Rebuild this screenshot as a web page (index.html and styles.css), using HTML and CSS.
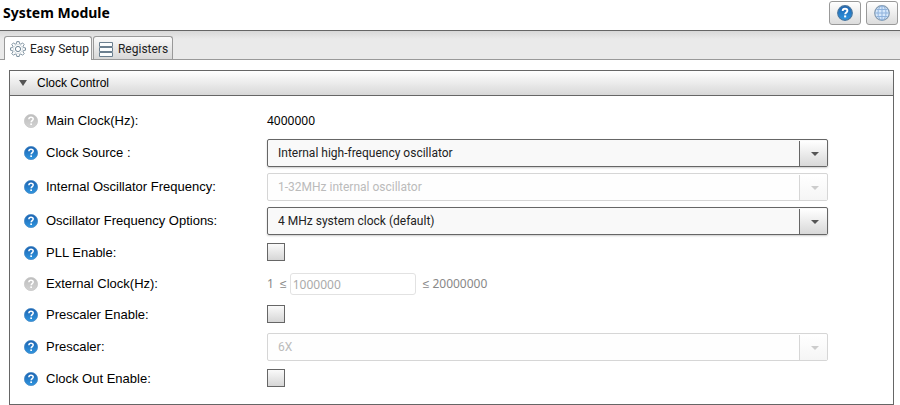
FILE: index.html
```html
<!DOCTYPE html>
<html lang="en">
<head>
<meta charset="utf-8">
<title>System Module</title>
<link rel="stylesheet" href="styles.css">
</head>
<body>
<svg class="sprites" aria-hidden="true">
  <defs>
    <linearGradient id="blue" x1="0" y1="0" x2="0" y2="1">
      <stop offset="0" stop-color="#1c62b0"/><stop offset="1" stop-color="#2f96e0"/>
    </linearGradient>
    <linearGradient id="gray" x1="0" y1="0" x2="0" y2="1">
      <stop offset="0" stop-color="#bdbdbd"/><stop offset="1" stop-color="#d2d2d2"/>
    </linearGradient>
    <symbol id="mark" viewBox="0 0 14 14">
      <path d="M4.9 5.3C4.9 3.9 5.7 3.2 7 3.2s2.2.8 2.2 1.9c0 1.5-2 1.6-2 3.2" fill="none" stroke="#fff" stroke-width="1.5"/>
      <rect x="6.3" y="9.4" width="1.7" height="1.6" fill="#fff"/>
    </symbol>
    <symbol id="help" viewBox="0 0 14 14">
      <circle cx="7" cy="7" r="6.6" fill="url(#blue)" stroke="#4a8cc6" stroke-width=".8"/>
      <use href="#mark"/>
    </symbol>
    <symbol id="help-off" viewBox="0 0 14 14">
      <circle cx="7" cy="7" r="6.6" fill="url(#gray)" stroke="#c8c8c8" stroke-width=".8"/>
      <use href="#mark"/>
    </symbol>
  </defs>
</svg>

<header class="titlebar">
  <h1>System Module</h1>
  <div class="actions">
    <button type="button" class="action" aria-label="Help">
      <svg width="16" height="16" viewBox="0 0 16 16">
        <circle cx="8" cy="8" r="7.3" fill="url(#blue)" stroke="#47759f" stroke-width="1.2"/>
        <path d="M5.7 5.9C5.7 4.3 6.6 3.7 8 3.7s2.4.8 2.4 2c0 1.7-2.2 1.8-2.2 3.5" fill="none" stroke="#fff" stroke-width="1.9"/>
        <rect x="7.1" y="10.4" width="2.1" height="2" fill="#fff"/>
      </svg>
    </button>
    <button type="button" class="action" aria-label="Web">
      <svg width="16" height="16" viewBox="0 0 16 16" fill="none">
        <circle cx="8" cy="8" r="7.3" fill="#d6e8fb" stroke="#8299b0" stroke-width="1.2"/>
        <path d="M8 1v14M1 8h14M2.4 4.5h11.2M2.4 11.5h11.2" stroke="#8fb2dc"/>
        <ellipse cx="8" cy="8" rx="4" ry="7" stroke="#8fb2dc"/>
      </svg>
    </button>
  </div>
</header>

<nav class="tabs" role="tablist">
  <button type="button" class="tab active" role="tab" aria-selected="true">
    <svg width="16" height="16" viewBox="0 0 16 16" fill="#fff" stroke="#728796">
      <path d="M6.8.6h2.4l.3 2 1.4.6 1.7-1.3 1.6 1.7-1.2 1.6.6 1.4 1.9.3v2.3l-2 .3-.5 1.4 1.2 1.7-1.6 1.6-1.7-1.2-1.4.6-.3 1.9H6.8l-.3-1.9-1.4-.6-1.7 1.2-1.6-1.6L3 10.9l-.6-1.4-1.9-.3V6.9l1.9-.3L3 5.2 1.8 3.6l1.6-1.7 1.7 1.3 1.4-.6z" stroke-width=".9"/>
      <circle cx="8" cy="8" r="4.5" stroke="#c3ced6" stroke-width=".7"/>
      <circle cx="8" cy="8" r="2.6"/>
    </svg>
    Easy Setup
  </button>
  <button type="button" class="tab" role="tab" aria-selected="false">
    <svg width="14" height="15" viewBox="0 0 14 15" fill="#fbfdfe" stroke="#6b7f8f">
      <path d="M.5.5h13v4H.5zM.5 5.5h13v4H.5zM.5 10.5h13v4H.5z"/>
    </svg>
    Registers
  </button>
</nav>

<main>
  <details class="panel" open>
    <summary><svg width="8" height="6" viewBox="0 0 8 6"><path d="M0 0h8L4 6z" fill="#555"/></svg>Clock Control</summary>
    <form class="fields">
      <div class="row">
        <svg class="help"><use href="#help-off"/></svg>
        <span class="name">Main Clock(Hz):</span>
        <output class="value">4000000</output>
      </div>
      <div class="row tall">
        <svg class="help"><use href="#help"/></svg>
        <label class="name" for="source">Clock Source :</label>
        <span class="combo"><select id="source"><option>Internal high-frequency oscillator</option></select></span>
      </div>
      <div class="row tall">
        <svg class="help"><use href="#help"/></svg>
        <label class="name" for="internal">Internal Oscillator Frequency:</label>
        <span class="combo off"><select id="internal" disabled><option>1-32MHz internal oscillator</option></select></span>
      </div>
      <div class="row tall">
        <svg class="help"><use href="#help"/></svg>
        <label class="name" for="options">Oscillator Frequency Options:</label>
        <span class="combo"><select id="options"><option>4 MHz system clock (default)</option></select></span>
      </div>
      <div class="row">
        <svg class="help"><use href="#help"/></svg>
        <label class="name" for="pll">PLL Enable:</label>
        <input type="checkbox" id="pll">
      </div>
      <div class="row medium">
        <svg class="help"><use href="#help-off"/></svg>
        <label class="name" for="external">External Clock(Hz):</label>
        <span class="range"><span>1&nbsp; ≤</span><input type="text" id="external" value="1000000" disabled><span class="upper">≤ 20000000</span></span>
      </div>
      <div class="row">
        <svg class="help"><use href="#help"/></svg>
        <label class="name" for="prescale">Prescaler Enable:</label>
        <input type="checkbox" id="prescale">
      </div>
      <div class="row tall">
        <svg class="help"><use href="#help"/></svg>
        <label class="name" for="prescaler">Prescaler:</label>
        <span class="combo off"><select id="prescaler" disabled><option>6X</option></select></span>
      </div>
      <div class="row">
        <svg class="help"><use href="#help"/></svg>
        <label class="name" for="clockout">Clock Out Enable:</label>
        <input type="checkbox" id="clockout">
      </div>
    </form>
  </details>
</main>
</body>
</html>
```

FILE: styles.css
```css
* { box-sizing: border-box; }

body {
  margin: 0;
  background: #fff;
  color: #000;
  font: 12px/16px "Noto Sans", sans-serif;
}

svg { display: block; flex: none; }
.sprites { position: absolute; width: 0; height: 0; }

.titlebar {
  display: flex;
  justify-content: space-between;
  align-items: center;
  height: 30px;
  padding: 0 2px 4px 3px;
}

h1 {
  margin: 0;
  font: bold 14px/22px "Noto Sans", sans-serif;
}

.actions { display: flex; gap: 5px; }

.action {
  display: flex;
  align-items: center;
  justify-content: center;
  width: 32px;
  height: 24px;
  padding: 0;
  border: 1px solid #999;
  border-radius: 3px;
  background: linear-gradient(#fff, #dcdcdc);
}

.tabs {
  display: flex;
  gap: 1px;
  height: 30px;
  padding: 5px 4px 0;
  border-top: 1px solid #666;
  border-bottom: 1px solid #999;
  background: linear-gradient(#d8d8d8, #eaeaea 8px);
}

.tab {
  display: flex;
  align-items: center;
  gap: 5px;
  height: 23px;
  padding: 2px 4px 0 5px;
  border: 1px solid #999;
  border-bottom: 0;
  border-radius: 3px 3px 0 0;
  background: linear-gradient(#fafafa, #d8d8d8);
  color: #222;
  font: 12px/16px Roboto, sans-serif;
}

.tab.active {
  height: 24px;
  padding: 1px 2px 0 5px;
  background: #fff;
  gap: 4px;
}

main { padding: 10px 6px 0 9px; }

.panel { border: 1px solid #666; }

summary {
  display: flex;
  align-items: center;
  gap: 10px;
  height: 25px;
  padding-left: 9px;
  border-bottom: 1px solid #666;
  background: linear-gradient(#fff, #d8d8d8);
  font: 12px/16px "Liberation Sans", sans-serif;
  list-style: none;
}

.fields { padding: 10px 65px 10px 14px; }

.row {
  display: flex;
  align-items: center;
  height: 30px;
}

.row.medium { height: 32px; }
.row.tall { height: 34px; }

.help { width: 14px; height: 14px; margin-right: 8px; }

.name {
  flex: 0 0 221px;
  font: 13px/16px "Liberation Sans", sans-serif;
}

.value { font-family: "Noto Sans", sans-serif; }

.combo {
  position: relative;
  flex: 1;
  height: 28px;
  border: 1px solid #666;
  border-radius: 2px;
  background: #f9f9f9;
  box-shadow: 0 1px 2px #ccc;
}

.combo select {
  display: block;
  width: 100%;
  height: 26px;
  padding: 0 36px 0 10px;
  border: 0;
  appearance: none;
  background: transparent;
  color: #222;
  font: 12px/16px Roboto, sans-serif;
  opacity: 1;
}

.combo::before {
  content: "";
  position: absolute;
  inset: 1px 0 0 auto;
  width: 27px;
  border-left: 1px solid #666;
  background: linear-gradient(#fff, #d8d8d8);
  pointer-events: none;
}

.combo::after {
  content: "";
  position: absolute;
  top: 12px;
  right: 8px;
  border: 4px solid transparent;
  border-top-color: #555;
  border-bottom: 0;
  pointer-events: none;
}

.combo.off {
  border-color: #d6d6d6;
  background: #fefefe;
  box-shadow: none;
}

.combo.off select { color: #bbb; }
.combo.off::before { border-color: #d6d6d6; background: linear-gradient(#fff, #f5f5f5); }
.combo.off::after { border-top-color: #ccc; }

input[type="checkbox"] {
  appearance: none;
  width: 18px;
  height: 18px;
  margin: 0 0 2px;
  border: 1px solid #666;
  background: linear-gradient(#fafafa, #d6d6d6);
}

.range {
  display: flex;
  align-items: center;
  color: #888;
}

.range input {
  width: 126px;
  height: 22px;
  margin: 0 7px 0 3px;
  padding: 0 2px;
  border: 1px solid #e2e2e2;
  border-radius: 3px;
  background: #fff;
  color: #aaa;
  font: 12px/16px "Noto Sans", sans-serif;
}
```
